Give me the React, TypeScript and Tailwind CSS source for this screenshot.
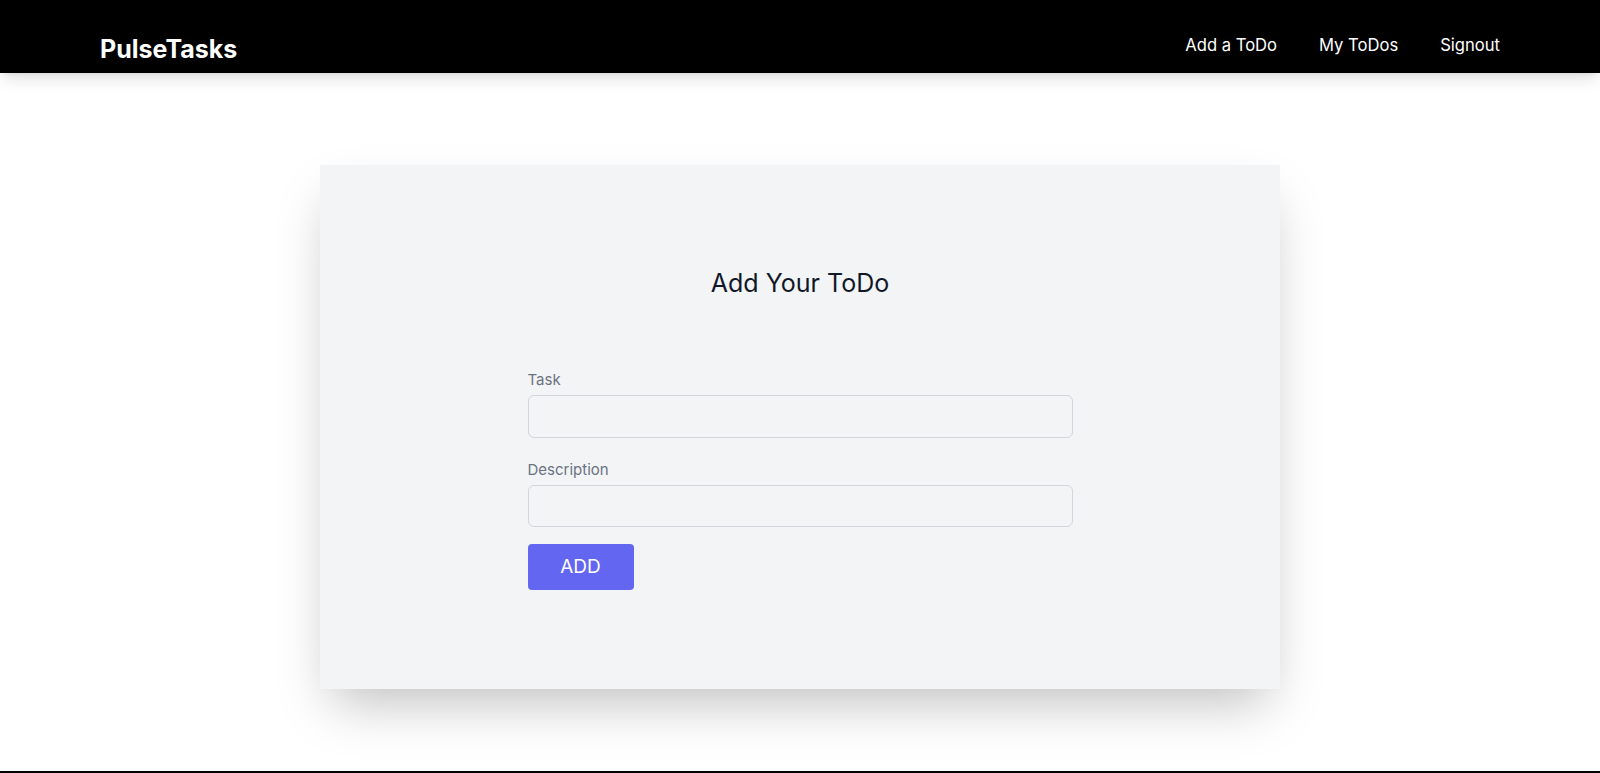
const Navbar = () => {
  return (
    <nav className="relative z-10 h-[73px] w-full bg-black shadow-lg">
      <div className="flex h-full items-start justify-between px-[100px]">
        <a href="#" className="pt-[33px] text-[25px] leading-[32px] font-bold text-white">
          PulseTasks
        </a>
        <ul className="flex gap-[42px] pt-[33px] text-[16.6px] leading-[24px] text-white">
          <li>
            <a href="#">Add a ToDo</a>
          </li>
          <li>
            <a href="#">My ToDos</a>
          </li>
          <li>
            <a href="#">Signout</a>
          </li>
        </ul>
      </div>
    </nav>
  );
};

const App = () => {
  return (
    <div className="min-h-screen bg-white" style={{ fontFamily: "Inter, 'Noto Sans', sans-serif" }}>
      <Navbar />
      <main className="flex justify-center pt-[92px] pb-[82px]">
        <div className="flex h-[524px] w-[960px] flex-col items-center bg-gray-100 pt-[100px] shadow-2xl">
          <h1 className="text-[25px] leading-[36px] text-gray-900">Add Your ToDo</h1>
          <form className="mt-[68px] flex w-[545px] flex-col">
            <label className="text-[15px] leading-[22px] text-gray-500">Task</label>
            <input
              type="text"
              className="mt-[4px] h-[43px] rounded-md border border-gray-300 bg-gray-100 px-3 outline-none"
            />
            <label className="mt-[21px] text-[15px] leading-[22px] text-gray-500">Description</label>
            <input
              type="text"
              className="mt-[4px] h-[42px] rounded-md border border-gray-300 bg-gray-100 px-3 outline-none"
            />
            <button
              type="button"
              className="mt-[17px] h-[46px] w-[106px] rounded bg-[#6366f1] text-[19px] text-white"
            >
              ADD
            </button>
          </form>
        </div>
      </main>
      <footer className="h-16 bg-black"></footer>
    </div>
  );
};

export default App;
